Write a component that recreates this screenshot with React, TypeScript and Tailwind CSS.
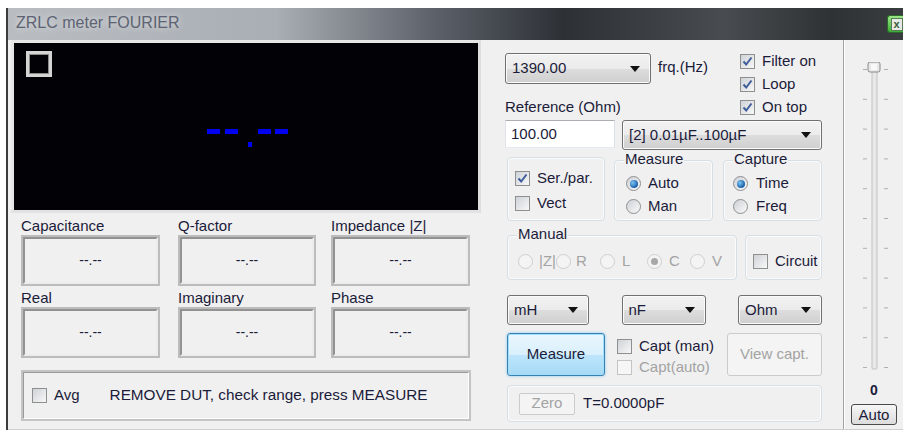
import React from "react";

const INK = "text-[#1b1b3a]";
const GRAY = "text-[#a3a3a3]";

function Check({ checked = false, disabled = false }: { checked?: boolean; disabled?: boolean }) {
  return (
    <div
      className={`flex h-[15px] w-[15px] shrink-0 items-center justify-center border ${
        disabled ? "border-[#c4c4c4] bg-[#f6f6f6]" : "border-[#8e8f8f] bg-[linear-gradient(135deg,#cfd3d8,#f7f7f7)]"
      }`}
    >
      {checked && (
        <svg width="13" height="13" viewBox="0 0 13 13">
          <path d="M2.5 6.5 L5.2 9.5 L10.5 2.5" fill="none" stroke="#3f5d9a" strokeWidth="2" />
        </svg>
      )}
    </div>
  );
}

function Radio({ on = false, disabled = false }: { on?: boolean; disabled?: boolean }) {
  return (
    <div
      className={`flex h-[15px] w-[15px] shrink-0 items-center justify-center rounded-full border ${
        disabled ? "border-[#cfcfcf] bg-[#f4f4f4]" : "border-[#8e8f8f] bg-[linear-gradient(135deg,#cdd1d6,#fafafa)]"
      }`}
    >
      {on &&
        (disabled ? (
          <div className="h-[7px] w-[7px] rounded-full bg-[#a8a8a8]" />
        ) : (
          <div className="h-[8px] w-[8px] rounded-full bg-[radial-gradient(circle_at_35%_35%,#7cc6f2,#1a5fa8_70%)]" />
        ))}
    </div>
  );
}

function Combo({ text, cls }: { text: string; cls: string }) {
  return (
    <div
      className={`flex items-center justify-between rounded-[3px] border border-[#707070] bg-[linear-gradient(#f2f2f2,#ebebeb_50%,#dddddd_50%,#cfcfcf)] pl-[6px] pr-[10px] shadow-[inset_0_0_0_1px_#fbfbfb] ${cls}`}
    >
      <span className={INK}>{text}</span>
      <svg width="10" height="6" viewBox="0 0 10 6">
        <path d="M0 0 H10 L5 6 Z" fill="#111" />
      </svg>
    </div>
  );
}

function Group({ title, cls, children }: { title?: string; cls: string; children: React.ReactNode }) {
  return (
    <div className={`relative rounded-[4px] border border-[#d5dfe5] shadow-[inset_0_0_0_1px_#fbfbfb] ${cls}`}>
      {title && (
        <span className={`absolute left-[9px] top-[-11px] bg-[#f0f0f0] px-[1px] leading-[18px] ${INK}`}>{title}</span>
      )}
      {children}
    </div>
  );
}

function ValueBox({ label, w }: { label: string; w: string }) {
  return (
    <div className={`flex flex-col ${w}`}>
      <div className={`h-[18px] leading-[18px] ${INK}`}>{label}</div>
      <div className="h-[51px] border-[2px] border-[#bcbcbc] bg-[#f0f0f0] p-0">
        <div className="flex h-full items-center justify-center border-[2px] border-t-[#929292] border-l-[#929292] border-b-[#ececec] border-r-[#ececec]">
          <span className={`text-[14px] ${INK}`}>--.--</span>
        </div>
      </div>
    </div>
  );
}

function Digits() {
  return (
    <svg width="81" height="18" viewBox="0 0 81 18">
      <rect x="0" y="0" width="13" height="5" fill="#0000f0" />
      <rect x="18" y="0" width="13" height="5" fill="#0000f0" />
      <rect x="41" y="13" width="4" height="5" fill="#0000f0" />
      <rect x="51" y="0" width="13" height="5" fill="#0000f0" />
      <rect x="68" y="0" width="13" height="5" fill="#0000f0" />
    </svg>
  );
}

function Scale() {
  const ticks = Array.from({ length: 11 }, (_, i) => 7 + i * 29.8);
  return (
    <svg width="58" height="312" viewBox="0 0 58 312">
      {ticks.map((y, i) => (
        <g key={i}>
          <rect x="18" y={y} width="4" height="1" fill="#b0b0b0" />
          <rect x="39" y={y} width="4" height="1" fill="#b0b0b0" />
        </g>
      ))}
      <rect x="27" y="5" width="5" height="302" rx="1" fill="#e8e8e8" stroke="#c2c2c2" />
      <rect x="23" y="0" width="12" height="10" rx="2" fill="#e8e8e8" stroke="#8a8a8a" />
      <rect x="26" y="2" width="6" height="6" fill="#f8f8f8" />
    </svg>
  );
}

export default function App() {
  return (
    <div className="h-[433px] w-[903px] overflow-hidden bg-white pl-[6px] pt-[8px] font-['Liberation_Sans',Arial,sans-serif] text-[15px]">
      <div className="flex h-[422px] flex-col border-l-[2px] border-[#3c3c3c]">
        {/* title bar */}
        <div className="flex h-[32px] shrink-0 items-start justify-between bg-[linear-gradient(90deg,#b9bdc2_0%,#a9aeb4_30%,#5b6068_48%,#2d3136_62%,#484b4f_80%,#2f3235_92%,#3a3d40_100%)] pl-[8px]">
          <span className="mt-[5px] text-[16px] leading-[20px] text-[#5d6372] [text-shadow:0_0_6px_#e6e6e6]">
            ZRLC meter FOURIER
          </span>
          <div className="mt-[7px] flex h-[18px] w-[16px] items-center justify-center rounded-l-[3px] border border-r-0 border-[#2c6a2a] bg-[linear-gradient(#9be886,#3cae34)] pl-[2px]">
            <div className="flex h-[13px] w-[12px] items-center justify-center border border-[#5a7a5a] bg-[#e4ebe4] text-[11px] font-bold leading-none text-[#3a5a3a]">
              x
            </div>
          </div>
        </div>

        {/* client area */}
        <div className="flex h-[390px] shrink-0 border-b border-[#cfcfcf] bg-[#f0f0f0]">
          {/* left panel */}
          <div className="ml-[3px] flex w-[470px] shrink-0 flex-col">
            <div className="relative h-[173px] border-[3px] border-t-[#e6e6e6] border-l-[#e6e6e6] border-b-[#e2e2e2] border-r-[#dedede] bg-[#020106]">
              <div className="absolute left-[12px] top-[8px] h-[26px] w-[26px] border-[3px] border-[#d4d4d4] shadow-[inset_0_0_0_1px_#8a8a8a]" />
              <div className="flex h-full items-center justify-center pl-[2px] pt-[23px]">
                <Digits />
              </div>
            </div>

            <div className="ml-[10px] mt-[4px] flex">
              <ValueBox label="Capacitance" w="w-[139px]" />
              <div className="ml-[18px]">
                <ValueBox label="Q-factor" w="w-[138px]" />
              </div>
              <div className="ml-[15px]">
                <ValueBox label="Impedance |Z|" w="w-[139px]" />
              </div>
            </div>
            <div className="ml-[10px] mt-[3px] flex">
              <ValueBox label="Real" w="w-[139px]" />
              <div className="ml-[18px]">
                <ValueBox label="Imaginary" w="w-[138px]" />
              </div>
              <div className="ml-[15px]">
                <ValueBox label="Phase" w="w-[139px]" />
              </div>
            </div>

            <div className="ml-[10px] mt-[12px] h-[51px] w-[450px] border-[2px] border-[#c4c4c4]">
              <div className="flex h-full items-center border border-t-[#9a9a9a] border-l-[#9a9a9a] border-b-white border-r-white pl-[8px]">
                <Check />
                <span className={`ml-[7px] ${INK}`}>Avg</span>
                <span className={`ml-[30px] text-[15.3px] ${INK}`}>REMOVE DUT, check range, press MEASURE</span>
              </div>
            </div>
          </div>

          {/* right panel */}
          <div className="flex w-[362px] shrink-0 flex-col pl-[24px] pt-[10px]">
            <div className="flex">
              <div className="flex w-[235px] flex-col pt-[3px]">
                <div className="flex items-center">
                  <Combo text="1390.00" cls="h-[31px] w-[146px]" />
                  <span className={`ml-[7px] -mt-[3px] ${INK}`}>frq.(Hz)</span>
                </div>
                <div className={`mt-[14px] leading-[18px] ${INK}`}>Reference (Ohm)</div>
              </div>
              <div className="flex flex-col">
                {["Filter on", "Loop", "On top"].map((t) => (
                  <div key={t} className="flex h-[23px] items-center">
                    <Check checked />
                    <span className={`ml-[7px] ${INK}`}>{t}</span>
                  </div>
                ))}
              </div>
            </div>

            <div className="mt-[1px] flex h-[30px] items-start">
              <div className="flex h-[28px] w-[110px] items-center border border-t-[#abadb3] border-l-[#e2e3ea] border-r-[#dbdfe6] border-b-[#e3e9ef] bg-white pl-[5px]">
                <span className={INK}>100.00</span>
              </div>
              <Combo text="[2] 0.01µF..100µF" cls="ml-[7px] h-[30px] w-[200px]" />
            </div>

            {/* option groups */}
            <div className="ml-[2px] mt-[7px] flex items-end">
              <Group cls="h-[64px] w-[98px] pl-[7px] pt-[8px]">
                <div className="flex h-[25px] items-center">
                  <Check checked />
                  <span className={`ml-[7px] ${INK}`}>Ser./par.</span>
                </div>
                <div className="flex h-[25px] items-center">
                  <Check />
                  <span className={`ml-[7px] ${INK}`}>Vect</span>
                </div>
              </Group>
              <Group title="Measure" cls="ml-[9px] h-[61px] w-[99px] pl-[11px] pt-[11px]">
                <div className="flex h-[23px] items-center">
                  <Radio on />
                  <span className={`ml-[7px] ${INK}`}>Auto</span>
                </div>
                <div className="flex h-[23px] items-center">
                  <Radio />
                  <span className={`ml-[7px] ${INK}`}>Man</span>
                </div>
              </Group>
              <Group title="Capture" cls="ml-[10px] h-[61px] w-[99px] pl-[9px] pt-[11px]">
                <div className="flex h-[23px] items-center">
                  <Radio on />
                  <span className={`ml-[8px] ${INK}`}>Time</span>
                </div>
                <div className="flex h-[23px] items-center">
                  <Radio />
                  <span className={`ml-[8px] ${INK}`}>Freq</span>
                </div>
              </Group>
            </div>

            <div className="ml-[2px] mt-[14px] flex">
              <Group title="Manual" cls="h-[45px] w-[230px] pl-[10px] pt-[16px]">
                <div className={`flex h-[18px] items-center ${GRAY}`}>
                  <div className="flex w-[38px] items-center">
                    <Radio disabled />
                    <span className="ml-[6px]">|Z|</span>
                  </div>
                  <div className="flex w-[44px] items-center">
                    <Radio disabled />
                    <span className="ml-[5px]">R</span>
                  </div>
                  <div className="flex w-[47px] items-center">
                    <Radio disabled />
                    <span className="ml-[7px]">L</span>
                  </div>
                  <div className="flex w-[43px] items-center">
                    <Radio on disabled />
                    <span className="ml-[7px]">C</span>
                  </div>
                  <div className="flex items-center">
                    <Radio disabled />
                    <span className="ml-[7px]">V</span>
                  </div>
                </div>
              </Group>
              <Group cls="ml-[8px] h-[45px] w-[77px] pl-[7px] pt-[16px]">
                <div className="flex h-[18px] items-center">
                  <Check />
                  <span className={`ml-[7px] ${INK}`}>Circuit</span>
                </div>
              </Group>
            </div>

            {/* unit selectors */}
            <div className="ml-[2px] mt-[15px] flex w-[315px] justify-between">
              <Combo text="mH" cls="h-[30px] w-[82px]" />
              <Combo text="nF" cls="h-[30px] w-[84px]" />
              <Combo text="Ohm" cls="h-[30px] w-[84px]" />
            </div>

            {/* actions */}
            <div className="ml-[2px] mt-[8px] flex h-[43px] w-[315px]">
              <div className="flex w-[98px] items-center justify-center rounded-[3px] border border-[#3c7fb1] bg-[linear-gradient(#eaf6fd,#d9f0fc_50%,#bee6fd_50%,#a7d9f5)] shadow-[inset_0_0_0_1px_#9ee0ff,0_0_3px_#7cc8f0]">
                <span className={INK}>Measure</span>
              </div>
              <div className="ml-[12px] flex flex-col pt-[3px]">
                <div className="flex h-[21px] items-center">
                  <Check />
                  <span className={`ml-[7px] ${INK}`}>Capt (man)</span>
                </div>
                <div className="flex h-[21px] items-center">
                  <Check disabled />
                  <span className={`ml-[7px] ${GRAY}`}>Capt(auto)</span>
                </div>
              </div>
              <div className="ml-auto flex w-[95px] items-center justify-center rounded-[3px] border border-[#c9cbcd] bg-[#f4f4f4]">
                <span className={GRAY}>View capt.</span>
              </div>
            </div>

            <Group cls="ml-[2px] mt-[9px] flex h-[37px] w-[315px] items-center pl-[11px]">
              <div className="flex h-[22px] w-[56px] items-center justify-center rounded-[2px] border border-[#c9cbcd] bg-[#f4f4f4]">
                <span className={GRAY}>Zero</span>
              </div>
              <span className={`ml-[8px] ${INK}`}>T=0.0000pF</span>
            </Group>
          </div>

          {/* gain slider */}
          <div className="flex h-full w-[2px] shrink-0 border-l border-[#a3a3a3] bg-white" />
          <div className="flex flex-1 flex-col items-start pt-[22px]">
            <Scale />
            <div className={`ml-[25px] mt-[8px] text-[14px] font-bold leading-[16px] ${INK}`}>0</div>
            <div className="ml-[6px] mt-[6px] flex h-[21px] w-[46px] items-center justify-center rounded-[3px] border border-[#4a4a4a] bg-[linear-gradient(#f6f6f6,#dcdcdc)]">
              <span className={`text-[15px] leading-none ${INK}`}>Auto</span>
            </div>
          </div>
        </div>
      </div>
    </div>
  );
}
